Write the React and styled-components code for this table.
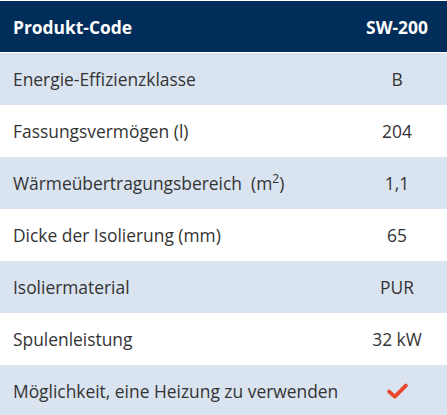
import React from "react";
import styled, { createGlobalStyle } from "styled-components";

const GlobalStyle = createGlobalStyle`
  html, body {
    margin: 0;
    padding: 0;
    background: #fff;
  }
  body {
    font-family: "Open Sans", "Liberation Sans", sans-serif;
  }
`;

const Table = styled.div`
  width: 447px;
  padding-top: 1px;
  display: flex;
  flex-direction: column;
`;

const Row = styled.div.withConfig({
  shouldForwardProp: (p) => p !== "head" && p !== "shaded",
})`
  display: grid;
  grid-template-columns: 1fr 72px;
  align-items: center;
  height: 52px;
  box-sizing: border-box;
  padding: 0 14px 0 13px;
  font-size: 17.4px;
  color: ${(p) => (p.head ? "#ffffff" : "#333333")};
  font-weight: ${(p) => (p.head ? 700 : 400)};
  background: ${(p) =>
    p.head ? "#012d5a" : p.shaded ? "#d9e4f0" : "#ffffff"};
  border-bottom: 1px solid ${(p) => (p.head ? "#ffffff" : "transparent")};
`;

const Label = styled.div`
  white-space: nowrap;
`;

const Value = styled.div`
  text-align: center;
  white-space: nowrap;
  display: flex;
  justify-content: center;
  align-items: center;
`;

const Sup = styled.sup`
  font-size: 12px;
  line-height: 0;
`;

const rows = [
  { label: "Energie-Effizienzklasse", value: "B" },
  { label: "Fassungsvermögen (l)", value: "204" },
  {
    label: (
      <>
        Wärmeübertragungsbereich&nbsp; (m<Sup>2</Sup>)
      </>
    ),
    value: "1,1",
  },
  { label: "Dicke der Isolierung (mm)", value: "65" },
  { label: "Isoliermaterial", value: "PUR" },
  { label: "Spulenleistung", value: "32 kW" },
  { label: "Möglichkeit, eine Heizung zu verwenden", value: "check" },
];

const Check = () => (
  <svg width="21" height="16" viewBox="0 0 21 16">
    <path
      d="M2.2 8.6 L7.8 13.6 L18.8 2.6"
      fill="none"
      stroke="#e8472b"
      strokeWidth="3.8"
      strokeLinecap="round"
      strokeLinejoin="round"
    />
  </svg>
);

const App = () => {
  return (
    <>
      <GlobalStyle />
      <Table>
        <Row head>
          <Label>Produkt-Code</Label>
          <Value>SW-200</Value>
        </Row>
        {rows.map((r, i) => (
          <Row key={i} shaded={i % 2 === 0}>
            <Label>{r.label}</Label>
            <Value>{r.value === "check" ? <Check /> : r.value}</Value>
          </Row>
        ))}
      </Table>
    </>
  );
};

export default App;
